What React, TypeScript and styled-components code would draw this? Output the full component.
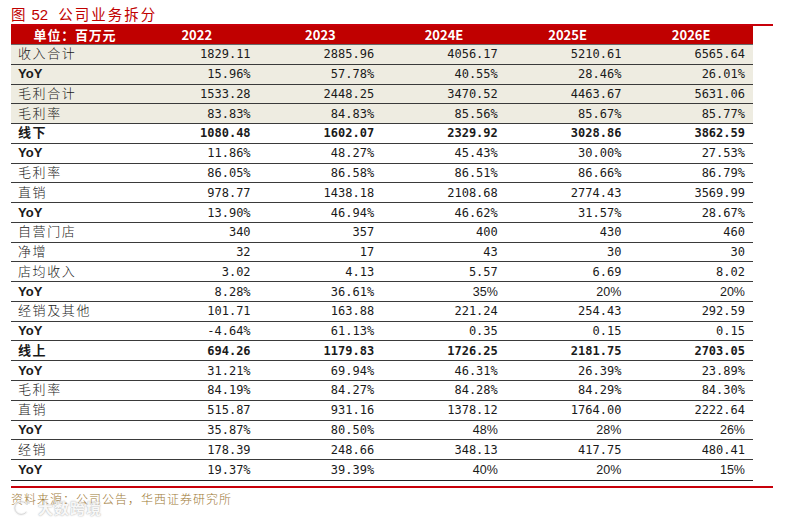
import styled, { createGlobalStyle } from "styled-components";

const GlobalStyle = createGlobalStyle`
  html, body {
    margin: 0;
    padding: 0;
    background: #ffffff;
  }
  body {
    font-family: "Noto Sans CJK SC", "Noto Sans", sans-serif;
  }
`;

const Page = styled.div`
  position: relative;
  width: 787px;
  height: 521px;
  padding: 4px 0 0 11px;
  box-sizing: border-box;
`;

const Title = styled.div`
  display: flex;
  align-items: baseline;
  gap: 4px;
  height: 20px;
  line-height: 20px;
  font-size: 14.5px;
  color: #c00000;
  letter-spacing: 2px;
`;

const TitleNum = styled.span`
  font-family: "Liberation Sans", Arial, sans-serif;
  font-size: 15px;
  letter-spacing: 0;
  margin-right: 6px;
`;

const RedRule = styled.div`
  width: 762px;
  height: 2px;
  background: #c8000a;
`;

const Table = styled.div`
  width: 742px;
  display: flex;
  flex-direction: column;
  border-bottom: 1px solid #222;
`;

const Row = styled.div<{ $beige?: boolean; $head?: boolean }>`
  display: grid;
  grid-template-columns: 124px repeat(5, 1fr);
  align-items: center;
  height: ${(p) => (p.$head ? "19px" : "19.78px")};
  line-height: 18px;
  box-sizing: border-box;
  background: ${(p) => (p.$head ? "#c00000" : p.$beige ? "#eeece1" : "#ffffff")};
  border-bottom: ${(p) => (p.$head ? "1px solid #6b6b6b" : "1px solid #3a3a3a")};

  &:last-child {
    border-bottom: none;
  }
`;

const HeadCell = styled.div`
  text-align: center;
  color: #ffffff;
  font-weight: 700;
  font-size: 13px;
  font-family: "Noto Sans CJK SC", "Noto Sans", sans-serif;
`;

const HeadLabel = styled(HeadCell)`
  letter-spacing: 0.8px;
  padding-left: 4px;
`;

const Label = styled.div<{ $bold?: boolean; $latin?: boolean }>`
  padding-left: 7px;
  font-size: 13px;
  color: #1a1a1a;
  font-weight: ${(p) => (p.$bold || p.$latin ? 700 : 300)};
  letter-spacing: ${(p) => (p.$latin ? "0" : "1.6px")};
  font-family: ${(p) =>
    p.$latin
      ? `"Liberation Sans", Arial, sans-serif`
      : `"Noto Sans CJK SC", "Noto Sans", sans-serif`};
  white-space: nowrap;
  transform: ${(p) => (p.$latin ? "none" : "translateY(-1px)")};
`;

const Value = styled.div<{ $bold?: boolean; $sans?: boolean }>`
  text-align: right;
  padding-right: 8px;
  color: #1a1a1a;
  font-size: ${(p) => (p.$sans ? "12.5px" : "12px")};
  font-weight: ${(p) => (p.$bold ? 700 : 400)};
  font-family: ${(p) =>
    p.$sans
      ? `"Liberation Sans", Arial, sans-serif`
      : `"DejaVu Sans Mono", "Liberation Mono", monospace`};
  white-space: nowrap;
`;

const BottomRule = styled(RedRule)`
  margin-top: 5px;
`;

const Source = styled.div`
  margin-top: 3px;
  font-size: 12px;
  line-height: 16px;
  letter-spacing: 1px;
  color: #a07a38;
  font-weight: 300;
`;

const Watermark = styled.div`
  position: absolute;
  left: 12px;
  top: 497px;
  display: flex;
  align-items: center;
  gap: 6px;
  opacity: 0.7;
  pointer-events: none;
`;

const WatermarkText = styled.span`
  font-size: 15px;
  font-weight: 700;
  color: #f6f6f6;
  letter-spacing: 1px;
  text-shadow: 0 0 1px #9a9a9a, 0 0 2px #b0b0b0;
`;

type RowData = {
  label: string;
  values: string[];
  beige?: boolean;
  bold?: boolean;
};

const years = ["2022", "2023", "2024E", "2025E", "2026E"];

const rows: RowData[] = [
  { label: "收入合计", values: ["1829.11", "2885.96", "4056.17", "5210.61", "6565.64"], beige: true },
  { label: "YoY", values: ["15.96%", "57.78%", "40.55%", "28.46%", "26.01%"], beige: true },
  { label: "毛利合计", values: ["1533.28", "2448.25", "3470.52", "4463.67", "5631.06"], beige: true },
  { label: "毛利率", values: ["83.83%", "84.83%", "85.56%", "85.67%", "85.77%"], beige: true },
  { label: "线下", values: ["1080.48", "1602.07", "2329.92", "3028.86", "3862.59"], bold: true },
  { label: "YoY", values: ["11.86%", "48.27%", "45.43%", "30.00%", "27.53%"] },
  { label: "毛利率", values: ["86.05%", "86.58%", "86.51%", "86.66%", "86.79%"] },
  { label: "直销", values: ["978.77", "1438.18", "2108.68", "2774.43", "3569.99"] },
  { label: "YoY", values: ["13.90%", "46.94%", "46.62%", "31.57%", "28.67%"] },
  { label: "自营门店", values: ["340", "357", "400", "430", "460"] },
  { label: "净增", values: ["32", "17", "43", "30", "30"] },
  { label: "店均收入", values: ["3.02", "4.13", "5.57", "6.69", "8.02"] },
  { label: "YoY", values: ["8.28%", "36.61%", "35%", "20%", "20%"] },
  { label: "经销及其他", values: ["101.71", "163.88", "221.24", "254.43", "292.59"] },
  { label: "YoY", values: ["-4.64%", "61.13%", "0.35", "0.15", "0.15"] },
  { label: "线上", values: ["694.26", "1179.83", "1726.25", "2181.75", "2703.05"], bold: true },
  { label: "YoY", values: ["31.21%", "69.94%", "46.31%", "26.39%", "23.89%"] },
  { label: "毛利率", values: ["84.19%", "84.27%", "84.28%", "84.29%", "84.30%"] },
  { label: "直销", values: ["515.87", "931.16", "1378.12", "1764.00", "2222.64"] },
  { label: "YoY", values: ["35.87%", "80.50%", "48%", "28%", "26%"] },
  { label: "经销", values: ["178.39", "248.66", "348.13", "417.75", "480.41"] },
  { label: "YoY", values: ["19.37%", "39.39%", "40%", "20%", "15%"] },
];

const isPlainPercent = (v: string) => /^\d+%$/.test(v);

const WatermarkLogo = () => (
  <svg width="20" height="18" viewBox="0 0 20 18">
    <path
      d="M14 4.5 A6.5 6.5 0 1 0 14 13.5"
      fill="none"
      stroke="#f4f4f4"
      strokeWidth="3"
      strokeLinecap="round"
    />
    <path
      d="M14 4.5 A6.5 6.5 0 1 0 14 13.5"
      fill="none"
      stroke="#a8a8a8"
      strokeWidth="0.6"
      strokeLinecap="round"
    />
    <circle cx="16.5" cy="3.5" r="1.6" fill="#d8d8d8" />
  </svg>
);

export default function App() {
  return (
    <>
      <GlobalStyle />
      <Page>
        <Title>
          <span>图</span>
          <TitleNum>52</TitleNum>
          <span>公司业务拆分</span>
        </Title>
        <RedRule />
        <Table>
          <Row $head>
            <HeadLabel>单位：百万元</HeadLabel>
            {years.map((y) => (
              <HeadCell key={y}>{y}</HeadCell>
            ))}
          </Row>
          {rows.map((r, i) => (
            <Row key={i} $beige={r.beige}>
              <Label $bold={r.bold} $latin={r.label === "YoY"}>
                {r.label}
              </Label>
              {r.values.map((v, j) => (
                <Value key={j} $bold={r.bold} $sans={isPlainPercent(v)}>
                  {v}
                </Value>
              ))}
            </Row>
          ))}
        </Table>
        <BottomRule />
        <Source>资料来源：公司公告，华西证券研究所</Source>
        <Watermark aria-hidden="true">
          <WatermarkLogo />
          <WatermarkText>大数跨境</WatermarkText>
        </Watermark>
      </Page>
    </>
  );
}
